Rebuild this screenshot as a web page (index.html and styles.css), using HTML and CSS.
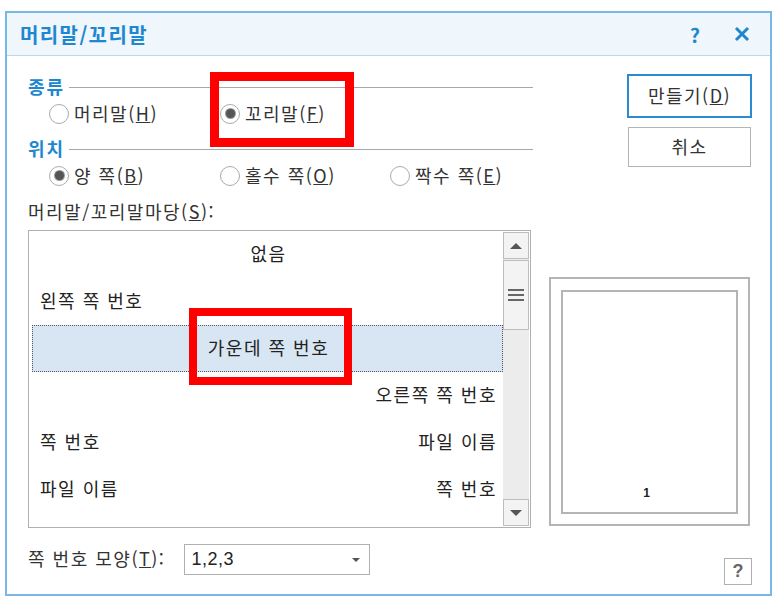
FILE: index.html
```html
<!DOCTYPE html>
<html lang="ko">
<head>
    <meta charset="UTF-8">
    <title>머리말/꼬리말</title>
    <link rel="stylesheet" href="styles.css">
</head>
<body>
    <div class="dialog">
        <div class="titlebar">
            <span class="title">머리말/꼬리말</span>
            <span class="title-help">?</span>
            <svg class="title-close" width="16" height="16" viewBox="0 0 16 16">
                <path d="M2 2 L14 14 M14 2 L2 14" stroke="#1e87cf" stroke-width="3" fill="none"/>
            </svg>
        </div>

        <div class="content">
            <div class="top-row">
                <div class="groups">
                    <div class="group-head"><span>종류</span><i></i></div>
                    <div class="radio-row">
                        <label class="radio"><span class="dot"></span>머리말(<u>H</u>)</label>
                        <label class="radio"><span class="dot on"></span>꼬리말(<u>F</u>)</label>
                    </div>
                    <div class="group-head second"><span>위치</span><i></i></div>
                    <div class="radio-row">
                        <label class="radio"><span class="dot on"></span>양 쪽(<u>B</u>)</label>
                        <label class="radio"><span class="dot"></span>홀수 쪽(<u>O</u>)</label>
                        <label class="radio"><span class="dot"></span>짝수 쪽(<u>E</u>)</label>
                    </div>
                </div>
                <div class="buttons">
                    <button class="btn default">만들기(<u>D</u>)</button>
                    <button class="btn">취소</button>
                </div>
            </div>

            <div class="list-label">머리말/꼬리말마당(<u>S</u>):</div>

            <div class="list-row">
                <div class="listbox">
                    <div class="items">
                        <div class="item center">없음</div>
                        <div class="item">왼쪽 쪽 번호</div>
                        <div class="item center selected">가운데 쪽 번호</div>
                        <div class="item right">오른쪽 쪽 번호</div>
                        <div class="item split"><span>쪽 번호</span><span>파일 이름</span></div>
                        <div class="item split"><span>파일 이름</span><span>쪽 번호</span></div>
                    </div>
                    <div class="scrollbar">
                        <div class="sb-btn"><span class="tri up"></span></div>
                        <div class="sb-thumb"><span class="grip"></span></div>
                        <div class="sb-track"></div>
                        <div class="sb-btn"><span class="tri down"></span></div>
                    </div>
                </div>
                <div class="preview">
                    <div class="page">
                        <span class="page-num">1</span>
                    </div>
                </div>
            </div>

            <div class="bottom-row">
                <span class="combo-label">쪽 번호 모양(<u>T</u>):</span>
                <div class="combo">
                    <span>1,2,3</span>
                    <span class="tri down small"></span>
                </div>
                <button class="help-btn">?</button>
            </div>
        </div>

        <div class="mark mark-footer"></div>
        <div class="mark mark-center"></div>
    </div>
</body>
</html>
```

FILE: styles.css
```css
body {
    margin: 0;
    background-color: #fff;
    font-family: "Noto Sans CJK KR", "Noto Sans", sans-serif;
    color: #222;
}

.dialog {
    position: relative;
    box-sizing: border-box;
    width: 767px;
    height: 585px;
    margin: 11px 0 0 5px;
    border: 2px solid #78b8e6;
    background-color: #fff;
}

.titlebar {
    display: flex;
    align-items: center;
    height: 42px;
    padding: 0 20px 0 13px;
    background-color: #eff6fc;
    border-bottom: 1px solid #bcd8ee;
}

.title {
    flex: 1;
    font-size: 20px;
    font-weight: bold;
    letter-spacing: 1.4px;
    color: #1e87cf;
}

.title-help {
    font-size: 20px;
    font-weight: bold;
    color: #1e87cf;
    margin-right: 34px;
}

.content {
    padding: 18px 18px 0 21px;
}

.top-row {
    display: flex;
}

.groups {
    width: 505px;
    padding-top: 2px;
}

.group-head {
    display: flex;
    align-items: center;
    height: 20px;
    font-size: 18px;
    font-weight: bold;
    letter-spacing: 2px;
    color: #1e87cf;
}

.group-head i {
    flex: 1;
    height: 0;
    margin: 2px 0 0 4px;
    border-top: 1px solid #a8a8a8;
}

.group-head.second {
    margin-top: 6px;
}

.radio-row {
    box-sizing: border-box;
    display: grid;
    grid-template-columns: 171px 170px 170px;
    height: 36px;
    padding: 0 0 3px 21px;
    align-items: center;
}

.radio {
    display: flex;
    align-items: center;
    font-size: 18px;
    letter-spacing: 1.5px;
    color: #333;
}

.radio u, .btn u, .list-label u, .combo-label u {
    text-decoration-thickness: 1px;
}

.dot {
    box-sizing: border-box;
    width: 20px;
    height: 20px;
    margin: 2px 5px 0 0;
    border: 1px solid #ababab;
    border-radius: 50%;
    background-color: #fff;
    display: flex;
    align-items: center;
    justify-content: center;
}

.dot.on::after {
    content: "";
    width: 9px;
    height: 9px;
    border-radius: 50%;
    background-color: #555;
    box-shadow: 0 0 0 1px #999;
}

.buttons {
    display: flex;
    flex-direction: column;
    margin-left: auto;
    width: 125px;
    gap: 9px;
}

.btn {
    box-sizing: border-box;
    height: 40px;
    margin: 0 1px;
    padding-bottom: 3px;
    background-color: #fff;
    border: 1px solid #b4b4b4;
    font-family: inherit;
    font-size: 18px;
    letter-spacing: 1.5px;
    color: #333;
}

.btn.default {
    height: 44px;
    margin: 0;
    border: 2px solid #2a8ad2;
}

.list-label {
    margin-top: 6px;
    height: 22px;
    line-height: 22px;
    font-size: 18px;
    letter-spacing: 1.5px;
    color: #333;
}

.list-row {
    display: flex;
    align-items: flex-end;
    margin-top: 8px;
}

.listbox {
    box-sizing: border-box;
    display: flex;
    width: 503px;
    height: 298px;
    border: 1px solid #b0b0b0;
}

.items {
    flex: 1;
    padding: 0 0 0 3px;
}

.item {
    box-sizing: border-box;
    display: flex;
    align-items: center;
    height: 47px;
    padding: 0 6px 4px 8px;
    font-size: 18px;
    letter-spacing: 1.5px;
    color: #222;
}

.item.center {
    justify-content: center;
}

.item.split {
    justify-content: space-between;
}

.item.right {
    justify-content: flex-end;
}

.item.selected {
    background-color: #d8e6f3;
    border: 1px dotted #555;
}

.scrollbar {
    display: flex;
    flex-direction: column;
    width: 26px;
    margin: 1px 1px 1px 0;
    background-color: #ececec;
}

.sb-btn, .sb-thumb {
    box-sizing: border-box;
    display: flex;
    align-items: center;
    justify-content: center;
    border: 1px solid #bdbdbd;
    background-color: #f3f3f3;
}

.sb-btn {
    height: 27px;
}

.sb-thumb {
    height: 70px;
    margin-top: 1px;
}

.sb-track {
    flex: 1;
}

.grip {
    width: 16px;
    height: 8px;
    border-top: 2px solid #666;
    border-bottom: 2px solid #666;
    position: relative;
}

.grip::after {
    content: "";
    position: absolute;
    left: 0;
    right: 0;
    top: 3px;
    border-top: 2px solid #666;
}

.tri {
    width: 0;
    height: 0;
    border-left: 6px solid transparent;
    border-right: 6px solid transparent;
}

.tri.up {
    border-bottom: 6px solid #555;
}

.tri.down {
    border-top: 6px solid #555;
}

.tri.small {
    border-left-width: 4px;
    border-right-width: 4px;
    border-top-width: 4px;
}

.preview {
    box-sizing: border-box;
    width: 201px;
    height: 249px;
    margin: 0 0 2px 18px;
    padding: 11px 10px 10px 10px;
    border: 2px solid #b4b4b4;
}

.page {
    box-sizing: border-box;
    height: 100%;
    border: 2px solid #b4b4b4;
    display: flex;
    align-items: flex-end;
    justify-content: center;
    padding-bottom: 12px;
}

.page-num {
    font-family: "Liberation Sans", sans-serif;
    font-size: 12px;
    font-weight: bold;
    line-height: 14px;
    margin-left: -6px;
}

.bottom-row {
    display: flex;
    align-items: flex-start;
    margin-top: 16px;
}

.combo-label {
    height: 31px;
    line-height: 29px;
    font-size: 18px;
    letter-spacing: 1.5px;
    color: #333;
    margin-right: 19px;
}

.combo {
    box-sizing: border-box;
    display: flex;
    align-items: center;
    justify-content: space-between;
    width: 186px;
    height: 31px;
    padding: 0 9px 0 6px;
    border: 1px solid #b0b0b0;
    font-family: "Liberation Sans", sans-serif;
    font-size: 18px;
    letter-spacing: 0.5px;
    color: #222;
}

.help-btn {
    box-sizing: border-box;
    width: 28px;
    height: 27px;
    margin: 14px 0 0 auto;
    padding: 0;
    background-color: #fff;
    border: 1px solid #b0b0b0;
    font-family: "Liberation Sans", sans-serif;
    font-size: 18px;
    font-weight: bold;
    color: #666;
}

.mark {
    position: absolute;
    box-sizing: border-box;
    border: 9px solid #ff0000;
}

.mark-footer {
    left: 203px;
    top: 59px;
    width: 144px;
    height: 75px;
}

.mark-center {
    left: 182px;
    top: 295px;
    width: 163px;
    height: 77px;
    border-width: 8px;
}
```
